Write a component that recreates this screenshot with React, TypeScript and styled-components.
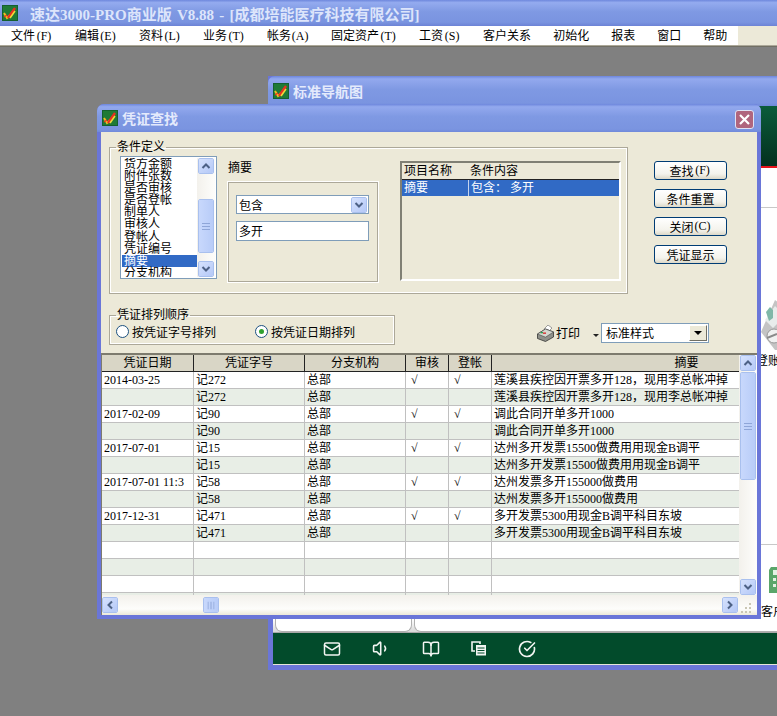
import * as React from 'react';
import styled, { createGlobalStyle } from 'styled-components';
import { Mail, Volume1, BookOpen, CircleCheckBig } from 'lucide-react';

const GlobalStyle = createGlobalStyle`
  html, body {
    margin: 0;
    padding: 0;
    background: #808080;
    overflow: hidden;
  }
  body {
    font-family: "Liberation Serif", "Noto Sans CJK SC", serif;
    font-size: 12px;
    color: #000;
  }
  * { box-sizing: border-box; }
`;

const Screen = styled.div`
  width: 777px;
  height: 716px;
  display: flex;
  flex-direction: column;
  overflow: hidden;
`;

const MainTitle = styled.div`
  height: 26px;
  display: flex;
  align-items: center;
  gap: 12px;
  padding-left: 2px;
  background: linear-gradient(#6e88dd 0, #94abef 10%, #7f99e3 45%, #7a94e0 85%, #6c83d6 100%);
  color: #dde5fb;
  font-size: 15px;
  font-weight: 700;
  white-space: pre;
  word-spacing: 1.5px;
`;

const MenuBar = styled.div`
  height: 20px;
  display: flex;
  background: #ece9d8;
  border-bottom: 1px solid #aca899;
`;

const MenuItems = styled.div`
  width: 738px;
  display: flex;
  align-items: center;
  background: #fff;
`;

const MenuItem = styled.span`
  padding: 0 11px;
  white-space: nowrap;
  line-height: 18px;
`;

const Accel = styled.span`
  display: inline-block;
  width: 18px;
  text-align: center;
`;

const Desktop = styled.div`
  position: relative;
  flex: 1;
  background: #808080;
  border-top: 1px solid #716f64;
  overflow: hidden;
`;

const WindowTitle = styled.div<{ $height: number }>`
  height: ${(p) => p.$height}px;
  flex: none;
  display: flex;
  align-items: center;
  gap: 4px;
  padding-left: 5px;
  border-radius: 7px 7px 0 0;
  background: linear-gradient(#6d86dc 0, #93a9ee 10%, #7f99e3 45%, #7a94e0 90%, #7089da 100%);
  color: #e4eafc;
  font-size: 14px;
  font-weight: 700;
`;

const BackWindow = styled.div`
  position: absolute;
  left: 268px;
  top: 29px;
  width: 640px;
  height: 594px;
  display: flex;
  flex-direction: column;
  background: #6a76d8;
  padding-bottom: 5px;
`;

const BackBody = styled.div`
  flex: 1;
  margin-left: 5px;
  display: flex;
  flex-direction: column;
  background: #fff;
`;

const Banner = styled.div`
  height: 62px;
  flex: none;
  background: linear-gradient(#0a5c3b, #03301f);
  border-bottom: 2px solid #e8141c;
`;

const NavPanel = styled.div`
  position: relative;
  height: 338px;
  flex: none;
  margin-top: 39px;
  border-top: 1px solid #c8c8c8;
  border-bottom: 1px solid #c8c8c8;
`;

const NavNode = styled.div<{ $left: number; $top: number }>`
  position: absolute;
  left: ${(p) => p.$left}px;
  top: ${(p) => p.$top}px;
  white-space: nowrap;
  line-height: 14px;
`;

const TabStrip = styled.div`
  flex: 1;
  display: flex;
  align-items: flex-end;
  gap: 2px;
  padding-left: 2px;
  background: linear-gradient(#fff 0, #fff 85%, #d8d8d8 100%);
  border-bottom: 1px solid #a8a8a8;
`;

const BottomTab = styled.div<{ $width: number }>`
  width: ${(p) => p.$width}px;
  height: 14px;
  background: #fff;
  border: 1px solid #b0b0b0;
  border-top: none;
  border-radius: 0 0 7px 7px;
`;

const Footer = styled.div`
  height: 32px;
  flex: none;
  display: flex;
  align-items: center;
  gap: 31px;
  padding-left: 50px;
  background: #024b2b;
  border-bottom: 1px solid #e6e6d8;
  color: #f2f5f2;
`;

const Dialog = styled.div`
  position: absolute;
  left: 97px;
  top: 57px;
  width: 664px;
  height: 515px;
  display: flex;
  flex-direction: column;
  background: #6a76d8;
  border-radius: 7px 7px 0 0;
`;

const CloseButton = styled.div`
  position: absolute;
  top: 6px;
  right: 7px;
  width: 19px;
  height: 19px;
  display: flex;
  align-items: center;
  justify-content: center;
  background: #b0657d;
  border: 1px solid #dfe3f5;
  border-radius: 3px;
  color: #fff;
`;

const DialogBody = styled.div`
  flex: 1;
  margin: 0 4px 4px;
  display: flex;
  flex-direction: column;
  background: #ece9d8;
`;

const TopRow = styled.div`
  display: flex;
  margin: 8px 0 0 8px;
`;

const Group = styled.fieldset`
  margin: 0;
  padding: 0;
  min-width: 0;
  border: 1px solid #aca899;
  box-shadow: 0 0 0 1px #fff inset;
  outline: none;
`;

const ConditionGroup = styled(Group)`
  width: 519px;
  height: 154px;
  display: flex;
  padding: 2px 0 0 10px;
`;

const GroupTitle = styled.legend<{ $shift: number }>`
  margin-left: ${(p) => p.$shift}px;
  padding: 0 1px;
  line-height: 14px;
`;

const ItemList = styled.div`
  width: 97px;
  height: 123px;
  flex: none;
  display: flex;
  padding: 1px;
  background: #fff;
  border: 1px solid #7f9db9;
`;

const ItemColumn = styled.div`
  width: 76px;
  overflow: hidden;
`;

const ListItem = styled.div<{ $selected?: boolean }>`
  height: 12.1px;
  line-height: 12px;
  padding-left: 2px;
  white-space: nowrap;
  background: ${(p) => (p.$selected ? '#316ac5' : 'transparent')};
  color: ${(p) => (p.$selected ? '#fff' : '#000')};
`;

const VScroll = styled.div<{ $width: number }>`
  width: ${(p) => p.$width}px;
  flex: none;
  display: flex;
  flex-direction: column;
  align-items: flex-start;
  padding-left: 1px;
  background: linear-gradient(90deg, #f3f1ec, #fdfdfb);
`;

const ScrollTrack = styled.div`
  flex: 1;
  width: 16px;
`;

const ScrollThumbV = styled.div<{ $top: number; $height: number }>`
  width: 16px;
  height: ${(p) => p.$height}px;
  margin-top: ${(p) => p.$top}px;
  display: flex;
  align-items: center;
  justify-content: center;
  background: linear-gradient(90deg, #c8d8fc, #b8ccf8);
  border: 1px solid #fff;
  outline: 1px solid #a9c0ee;
  outline-offset: -1px;
  border-radius: 2px;
`;

const ScrollBtn = styled.div`
  width: 16px;
  height: 16px;
  flex: none;
  display: flex;
  align-items: center;
  justify-content: center;
  background: linear-gradient(135deg, #d6e2fd, #b4c8f7);
  border: 1px solid #fff;
  outline: 1px solid #a9c0ee;
  outline-offset: -1px;
  border-radius: 2px;
`;

const ChevronIcon = styled.svg<{ $angle: number }>`
  width: 10px;
  height: 8px;
  transform: rotate(${(p) => p.$angle}deg);
`;

const GripIcon = styled.svg<{ $vertical?: boolean }>`
  width: 8px;
  height: 7px;
  transform: rotate(${(p) => (p.$vertical ? 0 : 90)}deg);
`;

const CriteriaColumn = styled.div`
  width: 150px;
  flex: none;
  margin-left: 11px;
`;

const CriteriaLabel = styled.div`
  height: 14px;
  line-height: 14px;
  margin: 5px 0 7px;
`;

const CriteriaBox = styled.div`
  height: 100px;
  display: flex;
  flex-direction: column;
  gap: 7px;
  padding: 12px 0 0 7px;
  border: 1px solid #aca899;
  box-shadow: 0 0 0 1px #fff;
`;

const Combo = styled.div<{ $width: number; $height: number }>`
  width: ${(p) => p.$width}px;
  height: ${(p) => p.$height}px;
  display: flex;
  align-items: center;
  justify-content: space-between;
  padding: 0 1px 0 2px;
  background: #fff;
  border: 1px solid #7f9db9;
`;

const ComboText = styled.span`
  padding-left: 2px;
`;

const TextField = styled.div`
  width: 133px;
  height: 20px;
  display: flex;
  align-items: center;
  padding-left: 2px;
  background: #fff;
  border: 1px solid #7f9db9;
`;

const SunkenList = styled.div`
  width: 221px;
  height: 120px;
  flex: none;
  margin: 5px 0 0 22px;
  border: 2px solid #808074;
  border-right-color: #fff;
  border-bottom-color: #fff;
`;

const SunkenRow = styled.div<{ $head?: boolean }>`
  display: grid;
  grid-template-columns: 66px 1fr;
  height: ${(p) => (p.$head ? 17 : 16)}px;
  line-height: 16px;
  background: ${(p) => (p.$head ? '#ece9d8' : '#316ac5')};
  color: ${(p) => (p.$head ? '#000' : '#fff')};
  border-bottom: ${(p) => (p.$head ? '1px solid #222' : 'none')};
`;

const SunkenCell = styled.span<{ $divider?: boolean }>`
  padding-left: 2px;
  border-left: ${(p) => (p.$divider ? '1px solid #c5d4ee' : 'none')};
`;

const ButtonColumn = styled.div`
  width: 73px;
  display: flex;
  flex-direction: column;
  gap: 9px;
  margin: 21px 0 0 26px;
`;

const ActionButton = styled.div`
  height: 19px;
  display: flex;
  align-items: center;
  justify-content: center;
  background: linear-gradient(#fff, #f4f3ec 70%, #dcd8c8);
  border: 1px solid #003c74;
  border-radius: 3px;
`;

const MiddleRow = styled.div`
  display: flex;
  margin: 14px 0 0 8px;
`;

const OrderGroup = styled(Group)`
  width: 286px;
  height: 37px;
  display: flex;
  align-items: center;
  padding: 0 0 3px 6px;
`;

const RadioLabel = styled.label`
  display: flex;
  align-items: center;
  gap: 3px;
  margin-right: 39px;
  white-space: nowrap;
`;

const Radio = styled.span<{ $checked?: boolean }>`
  position: relative;
  width: 13px;
  height: 13px;
  border-radius: 50%;
  background: #fff;
  border: 1px solid #1c5180;
  &::after {
    content: '';
    display: ${(p) => (p.$checked ? 'block' : 'none')};
    position: absolute;
    left: 3px;
    top: 3px;
    width: 5px;
    height: 5px;
    border-radius: 50%;
    background: #2fa12f;
  }
`;

const PrintArea = styled.div`
  display: flex;
  margin: 15px 0 0 142px;
  height: 20px;
`;

const PrintButton = styled.div`
  display: flex;
  align-items: center;
  gap: 2px;
  width: 64px;
  height: 20px;
`;

const DropCaret = styled.span`
  width: 0;
  height: 0;
  margin: 5px 0 0 11px;
  border-left: 3px solid transparent;
  border-right: 3px solid transparent;
  border-top: 3px solid #222;
`;

const BeveledDrop = styled.span`
  width: 18px;
  height: 16px;
  display: flex;
  align-items: center;
  justify-content: center;
  background: #ece9d8;
  border: 1px solid;
  border-color: #fff #716f64 #716f64 #fff;
`;

const BlackCaret = styled.span`
  width: 0;
  height: 0;
  border-left: 4px solid transparent;
  border-right: 4px solid transparent;
  border-top: 4px solid #000;
`;

const TableFrame = styled.div`
  margin-top: 8px;
  flex: 1;
  display: flex;
  flex-direction: column;
  border-top: 2px solid #7d7b6e;
  border-left: 1px solid #7d7b6e;
`;

const TableArea = styled.div`
  height: 240px;
  flex: none;
  display: flex;
`;

const TableClip = styled.div`
  width: 637px;
  flex: none;
  overflow: hidden;
`;

const GridRow = styled.div<{ $alt?: boolean }>`
  display: grid;
  grid-template-columns: 92px 111px 101px 43px 43px 390px;
  width: 780px;
  height: 17px;
  background: ${(p) => (p.$alt ? '#e8eee6' : '#fff')};
  border-bottom: 1px solid #c0c0c0;
`;

const HeadRow = styled(GridRow)`
  background: #d9d6c6;
  border-bottom: 1px solid #222;
`;

const Cell = styled.div<{ $tick?: boolean }>`
  padding-left: ${(p) => (p.$tick ? 5 : 2)}px;
  line-height: 16px;
  white-space: nowrap;
  overflow: hidden;
  border-right: 1px solid #c0c0c0;
`;

const HeadCell = styled.div`
  text-align: center;
  line-height: 16px;
  border-right: 1px solid #222;
`;

const HScroll = styled.div`
  flex: 1;
  display: flex;
  align-items: center;
  background: linear-gradient(#f3f1ec, #fdfdfb 70%, #ece9d8);
`;

const HTrack = styled.div`
  width: 604px;
  height: 16px;
  padding-left: 85px;
`;

const ScrollThumbH = styled(ScrollThumbV)`
  margin-top: 0;
`;

const GripCorner = styled.div`
  flex: 1;
  height: 100%;
  display: flex;
  align-items: flex-end;
  justify-content: flex-end;
  padding: 0 5px 2px 0;
`;

const Logo: React.FC = () => (
  <svg width="16" height="16" viewBox="0 0 16 16">
    <rect width="16" height="16" fill="#14602f" />
    <rect x="1" y="1" width="14" height="14" fill="#1f7a36" />
    <path d="M2 8l3 5 3-3" fill="none" stroke="#f0c020" strokeWidth="2" />
    <path d="M6 13L13 3" stroke="#e83020" strokeWidth="2.4" />
    <path d="M8 13l5-7" stroke="#f4d838" strokeWidth="1.6" />
    <path d="M2 12l3-2" stroke="#e83020" strokeWidth="1.4" />
  </svg>
);

const Chevron: React.FC<{ angle: number }> = ({ angle }) => (
  <ChevronIcon $angle={angle} viewBox="0 0 10 8">
    <path d="M1.5 6L5 2.5 8.5 6" fill="none" stroke="#4d6185" strokeWidth="2" />
  </ChevronIcon>
);

const Grip: React.FC<{ vertical?: boolean }> = ({ vertical }) => (
  <GripIcon $vertical={vertical} viewBox="0 0 8 7">
    <path d="M0 .5h8M0 3.5h8M0 6.5h8" stroke="#8fa6d8" strokeWidth="1" />
  </GripIcon>
);

const PrinterIcon: React.FC = () => (
  <svg width="17" height="17" viewBox="0 0 17 17">
    <path d="M7 4l4-4 4 3-4 4z" fill="#fff" stroke="#777" strokeWidth="0.7" />
    <path d="M0.5 9l8-5 8 3v5l-8 4.500-8-3z" fill="#8f918a" stroke="#333" strokeWidth="0.8" />
    <path d="M0.5 9l8 3.200 8-5.200-8-3z" fill="#d4d7cf" stroke="#444" strokeWidth="0.6" />
    <rect x="6" y="7.500" width="3" height="1.300" fill="#d82828" />
    <rect x="3.500" y="7" width="2.500" height="1.300" fill="#28a050" />
  </svg>
);

const CopyDocIcon: React.FC = () => (
  <svg width="16" height="15" viewBox="0 0 16 15" fill="none" stroke="currentColor">
    <path d="M9 3V1H1v9h3" strokeWidth="1.6" />
    <rect x="5" y="4" width="10" height="10.5" fill="currentColor" stroke="none" />
    <path d="M6.5 7h7M6.5 9.5h7M6.5 12h7" stroke="#024b2b" strokeWidth="1" />
  </svg>
);

const GearNodeIcon: React.FC = () => (
  <svg width="44" height="50" viewBox="0 0 44 50">
    <path d="M14 0l28 20-4 30H14L0 32z" fill="#c4c4c4" />
    <path d="M4 20l10-14 10 10-12 12z" fill="#e8eceb" />
    <path d="M5 12l4-5 3 3v8l-4 3z" fill="#7fb8a8" />
    <circle cx="13" cy="36" r="7" fill="#f0f0f0" stroke="#999" />
    <path d="M6 38l10-4" stroke="#8a8a8a" strokeWidth="2" />
  </svg>
);

const GreenNodeIcon: React.FC = () => (
  <svg width="20" height="30" viewBox="0 0 20 30">
    <path d="M2 2h18v26H0V5z" fill="#5aa66a" />
    <path d="M4 5h14v5H4zM4 13h3v3H4zM9 13h3v3H9zM14 13h3v3h-3zM4 19h3v3H4zM9 19h3v3H9z" fill="#e3f2e4" />
  </svg>
);

const menus: [string, string?][] = [
  ['文件', 'F'], ['编辑', 'E'], ['资料', 'L'], ['业务', 'T'], ['帐务', 'A'], ['固定资产', 'T'],
  ['工资', 'S'], ['客户关系'], ['初始化'], ['报表'], ['窗口'], ['帮助'],
];

const fields = ['货方金额', '附件张数', '是否审核', '是否登帐', '制单人', '审核人', '登帐人', '凭证编号', '摘要', '分支机构'];

const columns = ['凭证日期', '凭证字号', '分支机构', '审核', '登帐', '摘要'];

const vouchers: { date: string; no: string; memo: string }[] = [
  { date: '2014-03-25', no: '记272', memo: '莲溪县疾控因开票多开128，现用李总帐冲掉' },
  { date: '2017-02-09', no: '记90', memo: '调此合同开单多开1000' },
  { date: '2017-07-01', no: '记15', memo: '达州多开发票15500做费用用现金B调平' },
  { date: '2017-07-01 11:3', no: '记58', memo: '达州发票多开155000做费用' },
  { date: '2017-12-31', no: '记471', memo: '多开发票5300用现金B调平科目东坡' },
];

export default function App() {
  return (
    <Screen>
      <GlobalStyle />
      <MainTitle>
        <Logo />
        速达3000-PRO商业版 V8.88 - [成都培能医疗科技有限公司]
      </MainTitle>
      <MenuBar>
        <MenuItems>
          {menus.map(([label, key]) => (
            <MenuItem key={label}>
              {label}
              {key && <Accel>({key})</Accel>}
            </MenuItem>
          ))}
        </MenuItems>
      </MenuBar>

      <Desktop>
        <BackWindow>
          <WindowTitle $height={30}>
            <Logo />
            标准导航图
          </WindowTitle>
          <BackBody>
            <Banner />
            <NavPanel>
              <NavNode $left={488} $top={92}>
                <GearNodeIcon />
              </NavNode>
              <NavNode $left={483} $top={146}>登账</NavNode>
            </NavPanel>
            <TabStrip>
              <BottomTab $width={137} />
              <BottomTab $width={400} />
            </TabStrip>
            <Footer>
              <Mail size={18} strokeWidth={2} />
              <Volume1 size={19} strokeWidth={2} />
              <BookOpen size={18} strokeWidth={2} />
              <CopyDocIcon />
              <CircleCheckBig size={18} strokeWidth={2.2} />
            </Footer>
          </BackBody>
          <NavNode $left={501} $top={489}>
            <GreenNodeIcon />
          </NavNode>
          <NavNode $left={493} $top={529}>客户</NavNode>
        </BackWindow>

        <Dialog>
          <WindowTitle $height={28}>
            <Logo />
            凭证查找
            <CloseButton>
              <svg width="11" height="11" viewBox="0 0 11 11">
                <path d="M1 1l9 9M10 1l-9 9" stroke="#fff" strokeWidth="2.2" />
              </svg>
            </CloseButton>
          </WindowTitle>
          <DialogBody>
            <TopRow>
              <ConditionGroup>
                <GroupTitle $shift={-4}>条件定义</GroupTitle>
                <ItemList>
                  <ItemColumn>
                    {fields.map((f) => (
                      <ListItem key={f} $selected={f === '摘要'}>
                        {f}
                      </ListItem>
                    ))}
                  </ItemColumn>
                  <VScroll $width={18}>
                    <ScrollBtn>
                      <Chevron angle={0} />
                    </ScrollBtn>
                    <ScrollTrack>
                      <ScrollThumbV $top={25} $height={54}>
                        <Grip vertical />
                      </ScrollThumbV>
                    </ScrollTrack>
                    <ScrollBtn>
                      <Chevron angle={180} />
                    </ScrollBtn>
                  </VScroll>
                </ItemList>
                <CriteriaColumn>
                  <CriteriaLabel>摘要</CriteriaLabel>
                  <CriteriaBox>
                    <Combo $width={133} $height={19}>
                      包含
                      <ScrollBtn>
                        <Chevron angle={180} />
                      </ScrollBtn>
                    </Combo>
                    <TextField>多开</TextField>
                  </CriteriaBox>
                </CriteriaColumn>
                <SunkenList>
                  <SunkenRow $head>
                    <SunkenCell>项目名称</SunkenCell>
                    <SunkenCell>条件内容</SunkenCell>
                  </SunkenRow>
                  <SunkenRow>
                    <SunkenCell>摘要</SunkenCell>
                    <SunkenCell $divider>包含： 多开</SunkenCell>
                  </SunkenRow>
                </SunkenList>
              </ConditionGroup>
              <ButtonColumn>
                <ActionButton>
                  查找<Accel>(F)</Accel>
                </ActionButton>
                <ActionButton>条件重置</ActionButton>
                <ActionButton>
                  关闭<Accel>(C)</Accel>
                </ActionButton>
                <ActionButton>凭证显示</ActionButton>
              </ButtonColumn>
            </TopRow>

            <MiddleRow>
              <OrderGroup>
                <GroupTitle $shift={0}>凭证排列顺序</GroupTitle>
                <RadioLabel>
                  <Radio />
                  按凭证字号排列
                </RadioLabel>
                <RadioLabel>
                  <Radio $checked />
                  按凭证日期排列
                </RadioLabel>
              </OrderGroup>
              <PrintArea>
                <PrintButton>
                  <PrinterIcon />
                  打印
                  <DropCaret />
                </PrintButton>
                <Combo $width={108} $height={20}>
                  <ComboText>标准样式</ComboText>
                  <BeveledDrop>
                    <BlackCaret />
                  </BeveledDrop>
                </Combo>
              </PrintArea>
            </MiddleRow>

            <TableFrame>
              <TableArea>
                <TableClip>
                  <HeadRow>
                    {columns.map((c, i) => (
                      <HeadCell key={i}>{c}</HeadCell>
                    ))}
                  </HeadRow>
                  {vouchers.map((v) => (
                    <React.Fragment key={v.no}>
                      <GridRow>
                        <Cell>{v.date}</Cell>
                        <Cell>{v.no}</Cell>
                        <Cell>总部</Cell>
                        <Cell $tick>√</Cell>
                        <Cell $tick>√</Cell>
                        <Cell>{v.memo}</Cell>
                      </GridRow>
                      <GridRow $alt>
                        <Cell />
                        <Cell>{v.no}</Cell>
                        <Cell>总部</Cell>
                        <Cell />
                        <Cell />
                        <Cell>{v.memo}</Cell>
                      </GridRow>
                    </React.Fragment>
                  ))}
                  {[false, true, false, true].map((alt, i) => (
                    <GridRow key={i} $alt={alt}>
                      <Cell />
                      <Cell />
                      <Cell />
                      <Cell />
                      <Cell />
                      <Cell />
                    </GridRow>
                  ))}
                </TableClip>
                <VScroll $width={18}>
                  <ScrollBtn>
                    <Chevron angle={0} />
                  </ScrollBtn>
                  <ScrollTrack>
                    <ScrollThumbV $top={1} $height={108}>
                      <Grip vertical />
                    </ScrollThumbV>
                  </ScrollTrack>
                  <ScrollBtn>
                    <Chevron angle={180} />
                  </ScrollBtn>
                </VScroll>
              </TableArea>
              <HScroll>
                <ScrollBtn>
                  <Chevron angle={270} />
                </ScrollBtn>
                <HTrack>
                  <ScrollThumbH $top={0} $height={16}>
                    <Grip />
                  </ScrollThumbH>
                </HTrack>
                <ScrollBtn>
                  <Chevron angle={90} />
                </ScrollBtn>
                <GripCorner>
                  <svg width="11" height="11" viewBox="0 0 11 11">
                    <path d="M8 1h2v2H8zM4 5h2v2H4zM8 5h2v2H8zM0 9h2v2H0zM4 9h2v2H4zM8 9h2v2H8z" fill="#c9c6b4" />
                  </svg>
                </GripCorner>
              </HScroll>
            </TableFrame>
          </DialogBody>
        </Dialog>
      </Desktop>
    </Screen>
  );
}
